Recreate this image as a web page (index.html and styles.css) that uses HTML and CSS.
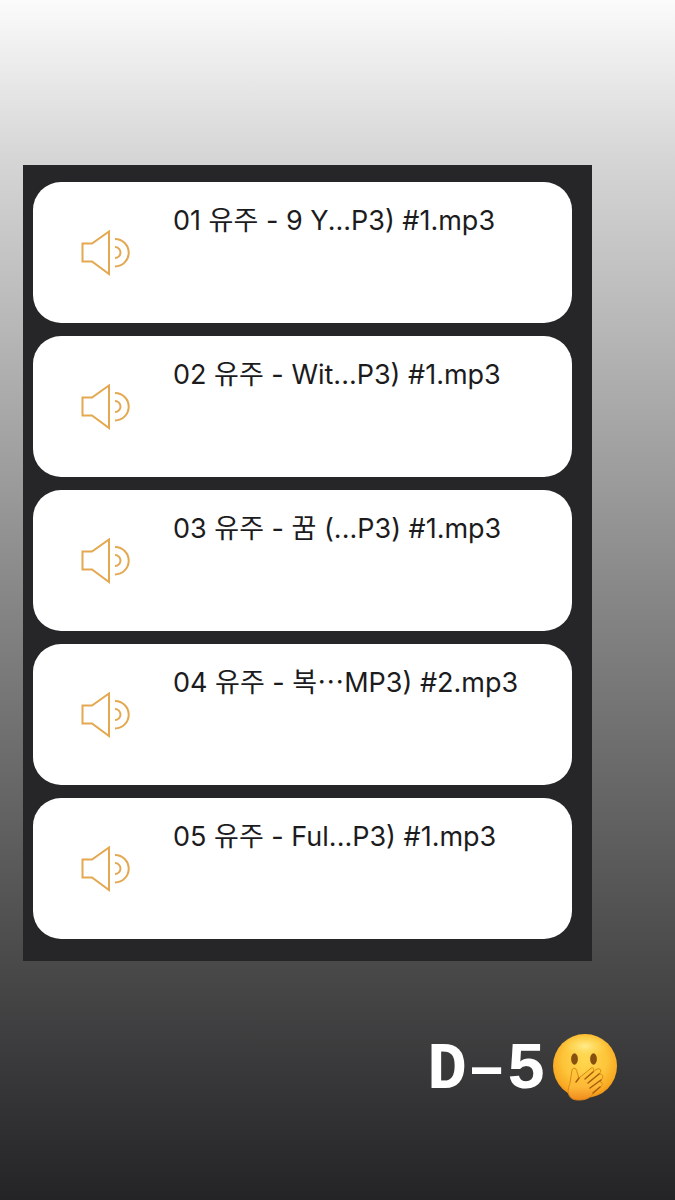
FILE: index.html
```
<!DOCTYPE html>
<html lang="ko">

<head>
    <meta charset="UTF-8">
    <meta name="viewport" content="width=device-width, initial-scale=1.0">
    <title>D-5</title>

    <link rel="stylesheet" href="styles.css">
</head>

<body>
    <!-- shared speaker icon -->
    <svg class="sprite" aria-hidden="true">
        <symbol id="speaker" viewBox="0 0 50 46">
            <path d="M1.5 13.5H11L28 1.5V44L11 31.5H1.5Z" />
            <path d="M34 17A5.5 5.5 0 0 1 34 28" />
            <path d="M34 9A13.7 13.7 0 0 1 34 36.4" />
        </symbol>
    </svg>

    <main class="story">
        <ul class="trackList">
            <li class="track">
                <svg class="speaker" aria-hidden="true"><use href="#speaker" /></svg>
                <p class="trackName">01 유주 - 9 Y...P3) #1.mp3</p>
            </li>
            <li class="track">
                <svg class="speaker" aria-hidden="true"><use href="#speaker" /></svg>
                <p class="trackName">02 유주 - Wit...P3) #1.mp3</p>
            </li>
            <li class="track">
                <svg class="speaker" aria-hidden="true"><use href="#speaker" /></svg>
                <p class="trackName">03 유주 - 꿈 (...P3) #1.mp3</p>
            </li>
            <li class="track">
                <svg class="speaker" aria-hidden="true"><use href="#speaker" /></svg>
                <p class="trackName">04 유주 - 복⋯MP3) #2.mp3</p>
            </li>
            <li class="track">
                <svg class="speaker" aria-hidden="true"><use href="#speaker" /></svg>
                <p class="trackName">05 유주 - Ful...P3) #1.mp3</p>
            </li>
        </ul>

        <div class="countdown">
            <span class="dday">D–5</span>
            <svg class="emoji" viewBox="0 0 66 68" role="img" aria-label="Face with hand over mouth">
                <defs>
                    <radialGradient id="face" cx="50%" cy="40%" r="62%">
                        <stop offset="0" stop-color="#ffd850" />
                        <stop offset="0.55" stop-color="#fdc53a" />
                        <stop offset="0.85" stop-color="#f8a922" />
                        <stop offset="1" stop-color="#e98b14" />
                    </radialGradient>
                    <radialGradient id="shine">
                        <stop offset="0" stop-color="#fff4a0" stop-opacity="0.8" />
                        <stop offset="1" stop-color="#ffe15a" stop-opacity="0" />
                    </radialGradient>
                    <linearGradient id="hand" x1="0" y1="0" x2="0" y2="1">
                        <stop offset="0" stop-color="#ffc93a" />
                        <stop offset="0.6" stop-color="#fdb838" />
                        <stop offset="1" stop-color="#f08a1c" />
                    </linearGradient>
                </defs>
                <circle cx="33" cy="33" r="32" fill="url(#face)" />
                <ellipse cx="33" cy="13" rx="24" ry="12" fill="url(#shine)" />
                <ellipse cx="22.5" cy="26" rx="3.4" ry="5.7" fill="#855010" />
                <ellipse cx="41.5" cy="26" rx="3.4" ry="5.7" fill="#855010" />
                <path d="M17 62C15 58 17 54 18 50C19 46 19 41 20 37C21 34 25 35 25 39L27 45L38 36C41 33 43 36 41 39L45 36C49 35 50 38 47 41L48 41C51 41 52 44 49 47L48 49C51 49 51 52 48 54L41 61C37 66 32 67 27 67C22 67 19 66 17 62Z" fill="url(#hand)" stroke="#dc8818" stroke-width="1" />
                <path d="M27 45L24 49M41 39L33 46M47 41L36 50M49 47L38 55M48 54L41 60" fill="none" stroke="#a95c0b" stroke-width="1.5" stroke-linecap="round" />
            </svg>
        </div>
    </main>
</body>

</html>
```
FILE: styles.css
```
body {
    font-family: Inter, 'Noto Sans CJK KR', sans-serif;
    margin: 0;
    padding: 0;
}

.sprite {
    display: none;
}

.story {
    min-height: 100vh;
    box-sizing: border-box;
    padding: 165px 83px 90px 23px;
    background: linear-gradient(#fbfbfb 0%, #d6d6d6 13%, #868686 50%, #4a4a4b 80%, #242426 100%);
}

.trackList {
    display: flex;
    flex-direction: column;
    gap: 13px;
    list-style: none;
    margin: 0;
    padding: 17px 20px 22px 10px;
    background-color: #262628;
}

.track {
    display: flex;
    align-items: center;
    gap: 42px;
    height: 141px;
    padding-left: 48px;
    box-sizing: border-box;
    background-color: #fff;
    border-radius: 28px;
}

.speaker {
    flex: none;
    width: 50px;
    height: 46px;
    fill: none;
    stroke: #e3a850;
    stroke-width: 2;
}

.trackName {
    align-self: flex-start;
    margin: 21px 0 0;
    font-size: 27px;
    line-height: 36px;
    color: #1c1c1e;
    white-space: nowrap;
}

.countdown {
    display: flex;
    justify-content: flex-end;
    align-items: flex-start;
    gap: 6px;
    margin-top: 72px;
    margin-right: -26px;
}

.dday {
    font-family: 'Liberation Mono', monospace;
    font-size: 66px;
    font-weight: bold;
    line-height: 76px;
    color: #fff;
}

.emoji {
    width: 66px;
    height: 68px;
}
```
